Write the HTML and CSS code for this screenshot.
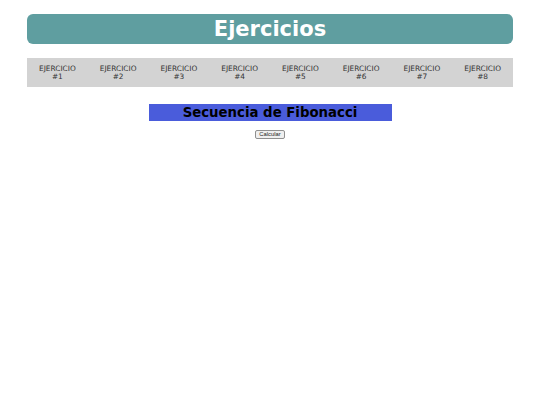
FILE: index.html
```html
<!DOCTYPE html>
<html lang="es">
<head>
<meta charset="utf-8">
<title>Ejercicios</title>
<link rel="stylesheet" href="styles.css">
</head>
<body>
<header class="header"><h1 class="header-title">Ejercicios</h1></header>
<nav class="nav">
  <a class="nav-item">EJERCICIO<br>#1</a>
  <a class="nav-item">EJERCICIO<br>#2</a>
  <a class="nav-item">EJERCICIO<br>#3</a>
  <a class="nav-item">EJERCICIO<br>#4</a>
  <a class="nav-item">EJERCICIO<br>#5</a>
  <a class="nav-item">EJERCICIO<br>#6</a>
  <a class="nav-item">EJERCICIO<br>#7</a>
  <a class="nav-item">EJERCICIO<br>#8</a>
</nav>
<main class="main">
  <h2 class="section-title">Secuencia de Fibonacci</h2>
  <button class="btn">Calcular</button>
</main>
</body>
</html>
```
FILE: styles.css
```css
html, body {
  margin: 0;
  padding: 0;
  background: #ffffff;
  font-family: "DejaVu Sans", Verdana, sans-serif;
}
body {
  padding-top: 14px;
}
.header {
  width: 486px;
  margin: 0 auto;
  height: 30px;
  background: #5f9ea0;
  border-radius: 6px;
  display: flex;
  align-items: center;
  justify-content: center;
}
.header-title {
  margin: 0;
  color: #ffffff;
  font-size: 21px;
  font-weight: bold;
  line-height: 30px;
}
.nav {
  width: 486px;
  margin: 14px auto 0;
  height: 29px;
  background: #d3d3d3;
  display: grid;
  grid-template-columns: repeat(8, 1fr);
  align-items: center;
}
.nav-item {
  text-align: center;
  font-size: 7.4px;
  line-height: 8px;
  color: #333333;
}
.main {
  display: flex;
  flex-direction: column;
  align-items: center;
  padding-top: 17px;
}
.section-title {
  margin: 0;
  width: 243px;
  height: 17px;
  background: #4a5cdb;
  color: #000000;
  font-size: 13.3px;
  font-weight: bold;
  line-height: 17px;
  text-align: center;
}
.btn {
  margin-top: 9px;
  height: 9px;
  padding: 0 3px;
  font-family: "Liberation Sans", Arial, sans-serif;
  font-size: 5.8px;
  line-height: 7px;
  color: #222;
  background: #efefef;
  border: 1px solid #8f8f8f;
  border-radius: 2px;
}
```
